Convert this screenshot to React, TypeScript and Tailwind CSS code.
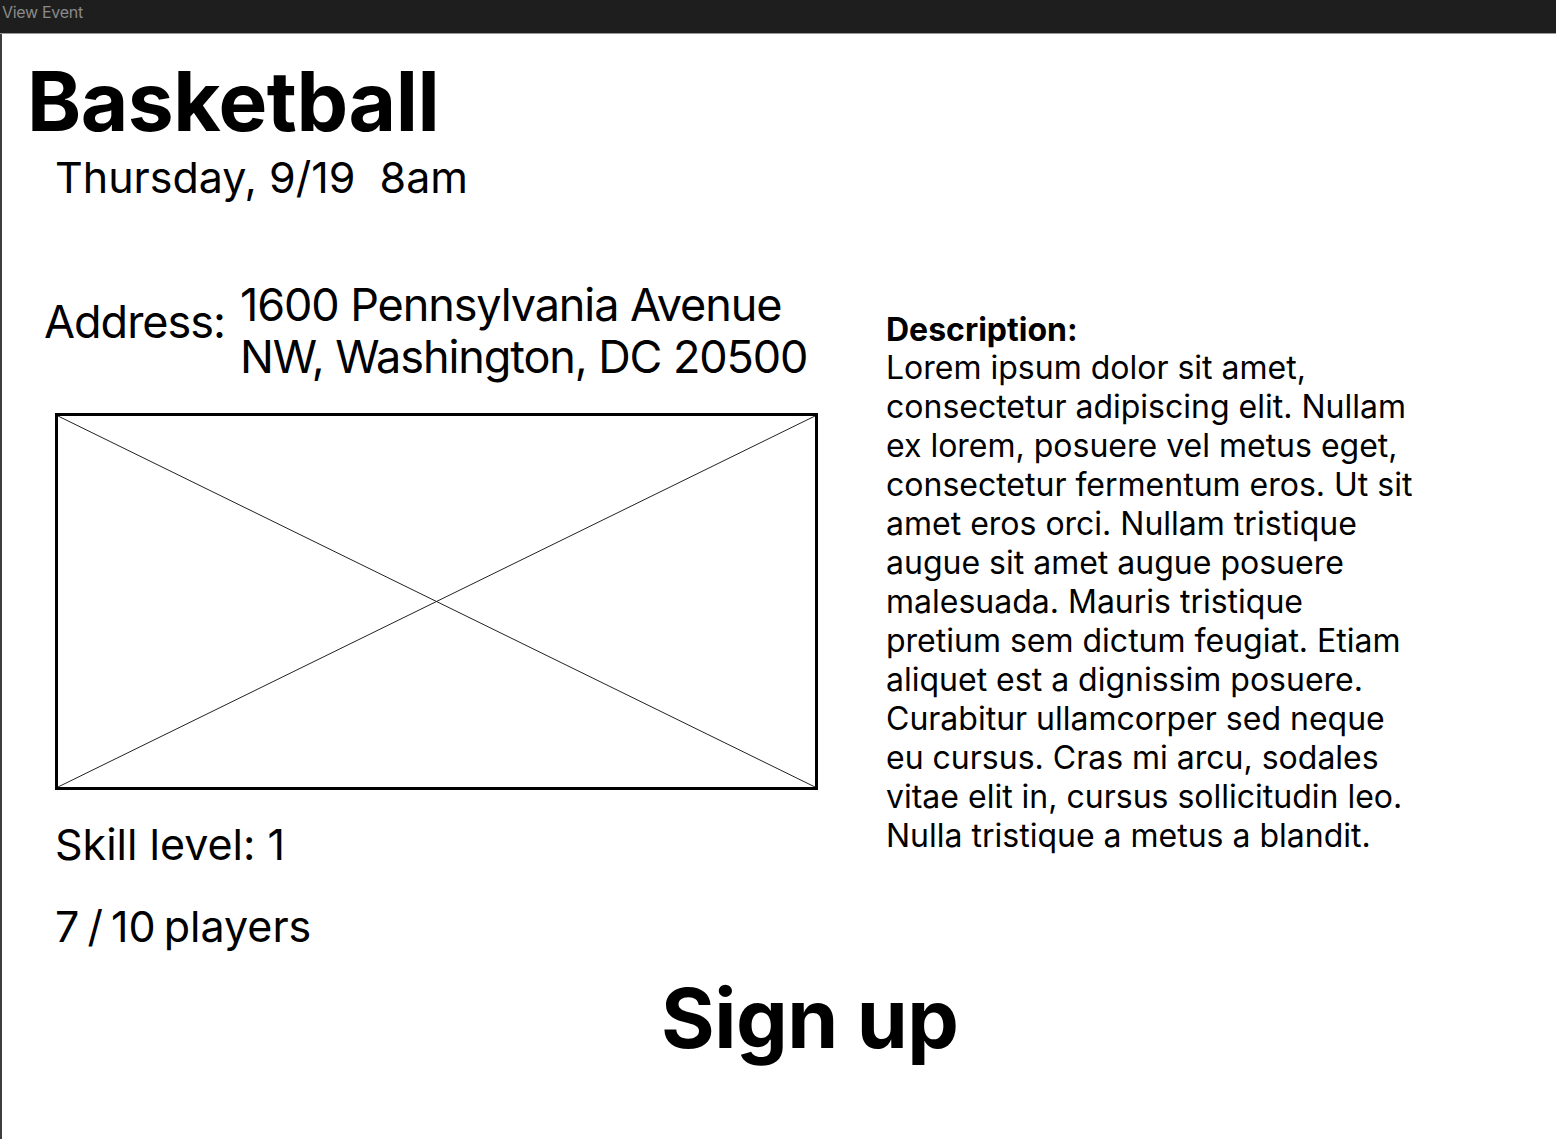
import React from "react";

const lines = [
  "Lorem ipsum dolor sit amet,",
  "consectetur adipiscing elit. Nullam",
  "ex lorem, posuere vel metus eget,",
  "consectetur fermentum eros. Ut sit",
  "amet eros orci. Nullam tristique",
  "augue sit amet augue posuere",
  "malesuada. Mauris tristique",
  "pretium sem dictum feugiat. Etiam",
  "aliquet est a dignissim posuere.",
  "Curabitur ullamcorper sed neque",
  "eu cursus. Cras mi arcu, sodales",
  "vitae elit in, cursus sollicitudin leo.",
  "Nulla tristique a metus a blandit.",
];

export default function App() {
  const font = { fontFamily: "Inter, 'Noto Sans', sans-serif" };
  return (
    <div className="w-[1556px] h-[1140px] overflow-hidden bg-white text-black" style={font}>
      <div className="h-[34px] bg-[#1e1e1e] border-b border-[#9a9a9a] flex items-start">
        <span className="text-[16px] leading-[25px] text-[#8a8a8a] pl-[2px] tracking-[-0.3px]">View Event</span>
      </div>
      <div className="h-[1105px] border-l-2 border-[#3d3d3d] bg-white">
        <h1 className="pl-[25px] pt-[27px] text-[82px] leading-none font-bold tracking-[-0.5px]">Basketball</h1>
        <div className="pl-[53px] mt-[13px] text-[43px] leading-none whitespace-pre">Thursday, 9/19  8am</div>

        <div className="flex mt-[80px]">
          <div className="pl-[42px] w-[884px] shrink-0">
            <div className="flex items-start">
              <div className="w-[196px] text-[45px] leading-[52px] mt-[17px] tracking-[-1px]">Address:</div>
              <div className="text-[45px] leading-[52px] tracking-[-1.1px]">
                <div>1600 Pennsylvania Avenue</div>
                <div>NW, Washington, DC 20500</div>
              </div>
            </div>
            <div className="relative ml-[11px] mt-[30px] w-[763px] h-[377px] border-[3px] border-black">
              <svg className="absolute inset-0 w-full h-full" viewBox="0 0 757 371" preserveAspectRatio="none">
                <line x1="0" y1="0" x2="757" y2="371" stroke="#222" strokeWidth="1" />
                <line x1="757" y1="0" x2="0" y2="371" stroke="#222" strokeWidth="1" />
              </svg>
            </div>
            <div className="ml-[11px] mt-[33px] text-[43px] leading-none">Skill level: 1</div>
            <div className="ml-[11px] mt-[39px] text-[43px] leading-none [word-spacing:-4px]">7 / 10 players</div>
          </div>
          <div className="mt-[33px] w-[560px]">
            <div className="text-[32px] leading-[36px] font-bold">Description:</div>
            <p className="text-[32px] leading-[39px]">
              {lines.map((l, i) => (
                <span key={i} className="block whitespace-nowrap">{l}</span>
              ))}
            </p>
          </div>
        </div>

        <div className="pl-[659px] mt-[30px] text-[82px] leading-none font-bold tracking-[-0.5px]">Sign up</div>
      </div>
    </div>
  );
}
